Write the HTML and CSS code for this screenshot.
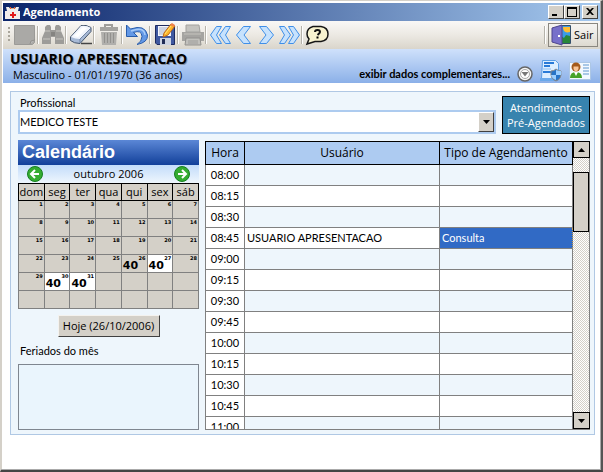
FILE: index.html
```html
<!DOCTYPE html>
<html lang="pt-BR">
<head>
<meta charset="utf-8">
<title>Agendamento</title>
<link rel="stylesheet" href="styles.css">
</head>
<body>
<div class="window">
  <header class="titlebar">
    <svg class="app-icon" viewBox="0 0 15 15" aria-hidden="true"><path d="M4 3h7v3H4z" fill="#d8b08a"/><path d="M1 2h3l1 2h5l1-2h3l-1 4H2z" fill="#eee"/><path d="M0 6h15v8H0z" fill="#f2ecea"/><path d="M5 2h1v2H5zM9 2h1v2H9z" fill="#e85a30"/><path d="M7 7h2v2h2v2H9v2H7v-2H5V9h2z" fill="#e01818"/></svg>
    <h1 class="titlebar-text">Agendamento</h1>
    <div class="window-buttons">
      <button class="win-btn" aria-label="Minimizar"><svg viewBox="0 0 12 10"><path d="M2 7h5v2H2z"/></svg></button>
      <button class="win-btn" aria-label="Maximizar"><svg viewBox="0 0 12 10"><path d="M1 0h10v10H1zM2 2v7h8V2z" fill-rule="evenodd"/></svg></button>
      <button class="win-btn win-btn-close" aria-label="Fechar"><svg viewBox="0 0 12 10"><path d="M2 1h2l2 2 2-2h2L7 4.500l3 3.500H8L6 6 4 8H2l3-3.500z"/></svg></button>
    </div>
  </header>

  <nav class="toolbar" aria-label="Ferramentas">
    <span class="grip"></span>
    <button class="tool" aria-label="Novo"><svg viewBox="0 0 24 24"><path d="M1.500 2.500h20v17l-2 2h-18z" fill="#aaa9a6" stroke="#9b9a97"/><path d="M17 21l1-3 4-1" fill="#bbb" stroke="#908f8c"/></svg></button>
    <span class="sep"></span>
    <button class="tool" aria-label="Pesquisar"><svg viewBox="0 0 24 24"><path d="M4 4l2-2h3l1 2v3h4V4l1-2h3l2 2v4l3 7v6h-9v-7h-4v7H1v-6l3-7z" fill="#9d9c99"/><path d="M2 16h7M15 16h7M4 8h5M15 8h5" stroke="#c8c6c0"/><path d="M10 9h4v4h-4z" fill="#858481"/></svg></button>
    <span class="sep"></span>
    <button class="tool" aria-label="Limpar"><svg viewBox="0 0 24 24"><path d="M12 20.500h11" stroke="#444" stroke-width="1.500"/><path d="M1.500 14L12 2.500q5-1 10 2v4L11 20.500q-6 0-9.500-3z" fill="#a8bad6" stroke="#44546c"/><path d="M2 14L12 3q5-1 10 2L11 16q-5 0-9-2z" fill="#f0f4fc"/><path d="M5 13l9-9 4 1-9 9z" fill="#fff"/><path d="M11 16v4M11 16L22 5" stroke="#7185a5"/></svg></button>
    <span class="sep"></span>
    <button class="tool" aria-label="Excluir"><svg viewBox="0 0 24 24"><path d="M8 4V2h7v2" fill="none" stroke="#9f9e9b" stroke-width="2"/><path d="M3 4h18v4H3z" fill="#a5a4a1"/><path d="M4 9h16l-1 13H5z" fill="#b0afac"/><path d="M7.500 10v10M10.500 10v10M13.500 10v10M16.500 10v10" stroke="#92918e"/></svg></button>
    <span class="sep"></span>
    <button class="tool" aria-label="Desfazer"><svg viewBox="0 0 24 24"><path d="M1.500 2v11.500h11l-4-4q8-3 8.500 4 0 5-5 8 11-2 10.500-9.500Q20 1 5.500 6z" fill="#6398e6" stroke="#285cab"/><path d="M6 8Q19 3 20 12" fill="none" stroke="#a6caf8" stroke-width="1.500"/></svg></button>
    <span class="sep"></span>
    <button class="tool" aria-label="Salvar"><svg viewBox="0 0 24 24"><path d="M2.500 2.500h18l1 1v18H4l-1.500-1.500z" fill="#4059a0" stroke="#1f2c60"/><path d="M5 3h13v10H5z" fill="#f4f6fc"/><path d="M6 5h10M6 7h9M6 9h8M6 11h7" stroke="#a5afc8"/><path d="M7 15h11v7H7z" fill="#cdd4e2"/><path d="M9 16h3v5H9z" fill="#222e56"/><path d="M10 14l1-4 7-9 4 2-7 9z" fill="#ffb62a" stroke="#bd6819"/><path d="M17 2l4 2 1-2-3-2z" fill="#ef824d"/><path d="M12 11l6-8" stroke="#ffe879"/></svg></button>
    <span class="sep"></span>
    <button class="tool" aria-label="Imprimir"><svg viewBox="0 0 24 24"><path d="M5 2h13l1 7H5z" fill="#c4c3bf" stroke="#a3a29f"/><path d="M1 9h22v9H1z" fill="#a5a4a1"/><path d="M3 11h17" stroke="#c6c4be"/><path d="M5 15h14l1 7H4z" fill="#c1c0bc" stroke="#92918e"/><path d="M7 18h10M7 20h10" stroke="#9f9e9b"/></svg></button>
    <span class="sep"></span>
    <button class="tool tool-nav" aria-label="Primeiro"><svg viewBox="0 0 23 24"><g fill="#c7e2fd" stroke="#3f8fe8"><path d="M7.500 3.500h5l-5 8.500 5 8.500h-5L1.500 12z"/><path d="M16.500 3.500h5l-5 8.500 5 8.500h-5l-6-8.500z"/></g></svg></button>
    <button class="tool tool-nav" aria-label="Anterior"><svg viewBox="0 0 23 24"><path d="M11.500 3.500h7L12 12l6.500 8.500h-7L4.500 12z" fill="#c7e2fd" stroke="#3f8fe8"/></svg></button>
    <button class="tool tool-nav" aria-label="Próximo"><svg viewBox="0 0 23 24"><path d="M11.500 3.500h-7L11 12l-6.500 8.500h7l7-8.500z" fill="#c7e2fd" stroke="#3f8fe8"/></svg></button>
    <button class="tool tool-nav" aria-label="Último"><svg viewBox="0 0 23 24"><g fill="#c7e2fd" stroke="#3f8fe8"><path d="M6.500 3.500h-5l5 8.500-5 8.500h5l6-8.500z"/><path d="M15.500 3.500h-5l5 8.500-5 8.500h5l6-8.500z"/></g></svg></button>
    <span class="sep"></span>
    <button class="tool" aria-label="Ajuda"><svg viewBox="0 0 24 24"><path d="M8 3.500h8q7 1 7 7.500t-7 7.500h-6L2 21l2-5q-2-2-2-5 0-6 6-7.500z" fill="#f7f2cf" stroke="#151515" stroke-width="1.500"/><path d="M10 9q0-2 2.500-2T15 9q0 1-2.500 3" fill="none" stroke="#111" stroke-width="2"/><path d="M11.500 13.500h2v2h-2z"/></svg></button>
    <span class="sep sep-end"></span>
    <button class="exit"><svg class="exit-icon" viewBox="0 0 20 22"><path d="M9 2h10v17H9z" fill="#3b9ce8"/><path d="M12 3h7v5q-7 2-7-5z" fill="#ffbd32"/><path d="M10 19v-7l3 2 2-3 4 1v7z" fill="#28873a"/><path d="M9.500 1.500h10v18h-10z" fill="none" stroke="#34506b"/><path d="M1 4l10-3v20L1 18z" fill="#7770ca" stroke="#4c458f"/><path d="M7 11h2v2H7z" fill="#fff"/></svg>Sair</button>
  </nav>

  <section class="patient">
    <div class="patient-info">
      <h2 class="patient-name">USUARIO APRESENTACAO</h2>
      <p class="patient-data">Masculino - 01/01/1970 (36 anos)</p>
    </div>
    <button class="more">exibir dados complementares...<svg class="more-icon" viewBox="0 0 16 16"><circle cx="8" cy="8" r="7" fill="#f6f6f6" stroke="#666" stroke-width="1.500"/><circle cx="8" cy="8" r="4.500" fill="#fff" stroke="#aaa"/><path d="M4.500 6h7L8 10.500z" fill="#777"/></svg></button>
    <button class="head-btn" aria-label="Convênio"><svg viewBox="0 0 22 22"><path d="M2.500.5h13l3 3v15h-17z" fill="#dceeff" stroke="#5a9ee5"/><path d="M0 18h16v3H0z" fill="#6aa9eb"/><path d="M4 3h10M4 6h6M3 12h9" stroke="#287ad7" stroke-width="2"/><path d="M3 9h8" stroke="#8abdf2"/><path d="M11 11q3 0 5-2 2 2 5 2 1 8-5 10-6-2-5-10z" fill="#2874c6" stroke="#888"/><path d="M16 10v5h5q1-2 0-4-3 0-5-1M11 15h5v5q-4-1-5-5" fill="#9ed0ff"/></svg></button>
    <button class="head-btn" aria-label="Ficha"><svg viewBox="0 0 22 22"><path d="M.5 2.500h21v17H.5z" fill="#f3f9ff" stroke="#adc7e5"/><path d="M14 5h6M14 8h6M14 11h6M14 14h6" stroke="#6097cf"/><path d="M1 18q0-6 6-6t6 6z" fill="#48a229"/><path d="M5 12h4l-2 4z" fill="#fff"/><circle cx="7" cy="7" r="4.500" fill="#a45a1b"/><path d="M4.500 6.500h5v2.500q-2.500 5-5 0z" fill="#f9c596"/></svg></button>
  </section>

  <main class="content">
    <div class="panel">
      <div class="top-row">
        <div class="field">
          <label class="label" for="prof">Profissional</label>
          <div class="combo">
            <select id="prof"><option>MEDICO TESTE</option></select>
            <span class="combo-arrow"><svg viewBox="0 0 7 4"><path d="M0 0h7L3.500 4z"/></svg></span>
          </div>
        </div>
        <button class="prebooked">Atendimentos<br>Pré-Agendados</button>
      </div>

      <div class="columns">
        <aside class="side">
          <h3 class="cal-title">Calendário</h3>
          <div class="cal-nav">
            <button class="round" aria-label="Mês anterior"><svg viewBox="0 0 16 16"><circle cx="8" cy="8" r="7.500" fill="#35ac30" stroke="#168020"/><path d="M12 8H4.500M8 4L4 8l4 4" fill="none" stroke="#fff" stroke-width="2"/></svg></button>
            <span>outubro 2006</span>
            <button class="round" aria-label="Próximo mês"><svg viewBox="0 0 16 16"><circle cx="8" cy="8" r="7.500" fill="#35ac30" stroke="#168020"/><path d="M4 8h7.500M8 4l4 4-4 4" fill="none" stroke="#fff" stroke-width="2"/></svg></button>
          </div>
          <table class="cal">
            <thead><tr><th>dom</th><th>seg</th><th>ter</th><th>qua</th><th>qui</th><th>sex</th><th>sáb</th></tr></thead>
            <tbody>
              <tr><td><i>1</i></td><td><i>2</i></td><td><i>3</i></td><td><i>4</i></td><td><i>5</i></td><td><i>6</i></td><td><i>7</i></td></tr>
              <tr><td><i>8</i></td><td><i>9</i></td><td><i>10</i></td><td><i>11</i></td><td><i>12</i></td><td><i>13</i></td><td><i>14</i></td></tr>
              <tr><td><i>15</i></td><td><i>16</i></td><td><i>17</i></td><td><i>18</i></td><td><i>19</i></td><td><i>20</i></td><td><i>21</i></td></tr>
              <tr><td><i>22</i></td><td><i>23</i></td><td><i>24</i></td><td><i>25</i></td><td><i>26</i><b>40</b></td><td class="open"><i>27</i><b>40</b></td><td><i>28</i></td></tr>
              <tr><td><i>29</i></td><td class="open"><i>30</i><b>40</b></td><td class="open"><i>31</i><b>40</b></td><td></td><td></td><td></td><td></td></tr>
              <tr><td></td><td></td><td></td><td></td><td></td><td></td><td></td></tr>
            </tbody>
          </table>
          <button class="today">Hoje (26/10/2006)</button>
          <h4 class="label holidays-label">Feriados do mês</h4>
          <div class="holidays"></div>
        </aside>

        <div class="grid">
          <div class="grid-view">
            <table class="agenda">
              <colgroup><col class="c-hour"><col><col class="c-type"></colgroup>
              <thead><tr><th>Hora</th><th>Usuário</th><th>Tipo de Agendamento</th></tr></thead>
              <tbody>
                <tr><td>08:00</td><td></td><td></td></tr>
                <tr><td>08:15</td><td></td><td></td></tr>
                <tr><td>08:30</td><td></td><td></td></tr>
                <tr><td>08:45</td><td>USUARIO APRESENTACAO</td><td class="selected">Consulta</td></tr>
                <tr><td>09:00</td><td></td><td></td></tr>
                <tr><td>09:15</td><td></td><td></td></tr>
                <tr><td>09:30</td><td></td><td></td></tr>
                <tr><td>09:45</td><td></td><td></td></tr>
                <tr><td>10:00</td><td></td><td></td></tr>
                <tr><td>10:15</td><td></td><td></td></tr>
                <tr><td>10:30</td><td></td><td></td></tr>
                <tr><td>10:45</td><td></td><td></td></tr>
                <tr><td>11:00</td><td></td><td></td></tr>
              </tbody>
            </table>
          </div>
          <div class="scroll">
            <button class="scroll-btn" aria-label="Rolar para cima"><svg viewBox="0 0 7 4"><path d="M0 4h7L3.500 0z"/></svg></button>
            <div class="track"><div class="thumb"></div></div>
            <button class="scroll-btn" aria-label="Rolar para baixo"><svg viewBox="0 0 7 4"><path d="M0 0h7L3.500 4z"/></svg></button>
          </div>
        </div>
      </div>
    </div>
  </main>
</div>
</body>
</html>
```
FILE: styles.css
```css
* { box-sizing: border-box; }

body {
  margin: 0;
  font-family: "Open Sans", "Noto Sans", sans-serif;
  font-size: 11px;
  line-height: 14px;
  color: #000;
}

h1, h2, h3, h4, p { margin: 0; }

button {
  font: inherit;
  color: inherit;
  padding: 0;
  border: 0;
  background: none;
}

svg { display: block; }

.window {
  display: flex;
  flex-direction: column;
  height: 100vh;
  min-height: 440px;
  padding: 2px 1px 1px 2px;
  background: #fff;
  border: 1px solid #d4d0c8;
  border-right: 2px solid #555;
  border-bottom: 2px solid #444;
  box-shadow: inset -1px -1px #aaa, inset 1px 0 #d4d0c8;
}

/* Title bar */
.titlebar {
  display: flex;
  align-items: center;
  gap: 3px;
  height: 18px;
  flex: none;
  padding: 0 2px;
  background: linear-gradient(90deg, #0a246a, #a6caf0);
}
.app-icon { width: 15px; height: 15px; }
.titlebar-text {
  flex: 1;
  font: bold 11px/16px "Open Sans", sans-serif;
  color: #fff;
}
.window-buttons { display: flex; }
.win-btn {
  width: 16px;
  height: 14px;
  padding: 1px;
  background: #d4d0c8;
  border: 1px solid;
  border-color: #fff #404040 #404040 #fff;
}
.win-btn svg { width: 12px; height: 10px; }
.win-btn-close { margin-left: 2px; }

/* Toolbar */
.toolbar {
  display: flex;
  align-items: center;
  height: 28px;
  flex: none;
  padding: 0 2px 0 5px;
  background: linear-gradient(#f9f8f6, #ece9e3 50%, #d9d5cb);
}
.grip {
  width: 2px;
  height: 16px;
  margin-right: 3px;
  background: repeating-linear-gradient(#aaa69c 0 2px, transparent 2px 4px);
}
.tool { width: 24px; height: 24px; }
.tool-nav { width: 23px; }
.tool svg { width: 100%; height: 100%; }
.sep {
  width: 4px;
  height: 18px;
  border-left: 1px solid #b5b2aa;
  background: linear-gradient(90deg, #fff 1px, transparent 1px);
}
.sep-end { margin-left: auto; }
.exit {
  display: flex;
  align-items: center;
  gap: 3px;
  width: 50px;
  height: 24px;
  padding: 0 2px;
  border: 1px solid #8a8780;
}
.exit-icon { width: 20px; height: 22px; }

/* Patient header */
.patient {
  display: flex;
  align-items: flex-end;
  gap: 7px;
  height: 34px;
  flex: none;
  padding: 0 9px 1px 7px;
  background: linear-gradient(#cfe1fb, #8bb0e8);
}
.patient-info { flex: 1; }
.patient-name {
  font: bold 14px/18px "Open Sans", sans-serif;
  text-shadow: 1px 1px #8a94a4;
}
.patient-data { padding-left: 3px; line-height: 14px; }
.more {
  display: flex;
  align-items: center;
  gap: 7px;
  font: bold 11px/14px Lato, sans-serif;
}
.more-icon { width: 16px; height: 16px; }
.head-btn { width: 22px; height: 22px; }
.head-btn svg { width: 22px; height: 22px; }

/* Main panel */
.content {
  flex: 1;
  display: flex;
  min-height: 0;
  padding: 8px 5px 34px 7px;
}
.panel {
  flex: 1;
  display: flex;
  flex-direction: column;
  gap: 6px;
  min-width: 0;
  padding: 4px 4px 4px 7px;
  background: #eef6fc;
  border: 1px solid #b0c8e4;
}
.top-row { display: flex; gap: 6px; }
.field {
  flex: 1;
  display: flex;
  flex-direction: column;
  justify-content: space-between;
}
.label {
  padding-left: 2px;
  font: 11px/14px Lato, sans-serif;
}
.combo { display: grid; border: 2px solid #adcbef; }
.combo select {
  grid-area: 1 / 1;
  appearance: none;
  height: 20px;
  padding: 0;
  border: 0;
  border-radius: 0;
  background: #fff;
  color: #000;
  font: 11px/14px Lato, sans-serif;
}
.combo-arrow {
  grid-area: 1 / 1;
  justify-self: end;
  display: grid;
  place-items: center;
  width: 16px;
  height: 20px;
  background: #d4d0c8;
  border: 1px solid;
  border-color: #fff #404040 #404040 #fff;
  pointer-events: none;
}
.combo-arrow svg, .scroll-btn svg { width: 7px; height: 4px; }
.prebooked {
  width: 88px;
  height: 38px;
  background: #3783ae;
  border: 1px solid #000;
  color: #fff;
  line-height: 15px;
}

.columns { flex: 1; display: flex; gap: 6px; min-height: 0; }

/* Calendar */
.side { width: 181px; display: flex; flex-direction: column; }
.cal-title {
  padding-left: 4px;
  font: bold 18px/25px "Liberation Sans", sans-serif;
  color: #fff;
  background: linear-gradient(#5b87d6, #12409a);
}
.cal-nav {
  display: flex;
  justify-content: space-between;
  align-items: center;
  height: 18px;
  padding: 0 9px;
  background: linear-gradient(#c3dcfa, #eef6fd);
}
.round { width: 16px; height: 16px; }
.round svg { width: 16px; height: 16px; }
.cal {
  width: 100%;
  table-layout: fixed;
  border-collapse: collapse;
  background: #d4d0c8;
  border: 1px solid #808080;
}
.cal th {
  height: 17px;
  padding: 0;
  border: 1px solid #000;
  font-weight: normal;
}
.cal td {
  position: relative;
  height: 18px;
  padding: 0;
  border: 1px solid #808080;
}
.cal i {
  position: absolute;
  top: 1px;
  right: 1px;
  font: bold 5px/5px "DejaVu Sans", sans-serif;
}
.cal b {
  display: block;
  padding: 5px 0 0 1px;
  font: bold 11px/12px "DejaVu Sans", sans-serif;
}
.cal .open { background: #fff; }
.today {
  align-self: center;
  width: 102px;
  height: 22px;
  margin-top: 6px;
  background: #d4d0c8;
  border: 1px solid;
  border-color: #f4f2ee #404040 #404040 #f4f2ee;
}
.holidays-label { margin: 7px 0 6px; }
.holidays {
  flex: 1;
  background: #eaf5fd;
  border: 1px solid #7f8690;
}

/* Agenda */
.grid {
  flex: 1;
  display: flex;
  min-width: 0;
  margin-top: 1px;
  border-bottom: 1px solid #808080;
}
.grid-view { flex: 1; overflow: hidden; }
.agenda {
  width: 100%;
  table-layout: fixed;
  border-collapse: collapse;
}
.c-hour { width: 39px; }
.c-type { width: 133px; }
.agenda th {
  height: 23px;
  padding: 0;
  background: #adcbf1;
  border: 1px solid #000;
  font-size: 12px;
  font-weight: normal;
}
.agenda td {
  height: 21px;
  padding: 0 2px;
  border: 1px solid #808080;
  background: #fff;
  font-family: Lato, sans-serif;
  white-space: nowrap;
}
.agenda td:first-child { text-align: center; }
.agenda tr:nth-child(odd) td:not(:first-child) { background: #eef6fc; }
.agenda .selected { background: #316ac5; color: #fff; border: 1px dotted #c79a4a; }
.scroll {
  display: flex;
  flex-direction: column;
  width: 17px;
}
.scroll-btn {
  display: grid;
  place-items: center;
  height: 17px;
  flex: none;
  background: #d4d0c8;
  border: 1px solid #000;
}
.track {
  flex: 1;
  padding-top: 14px;
  background: repeating-conic-gradient(#d4d0c8 0 25%, #fff 0 50%) 0 0 / 2px 2px;
  border-right: 1px solid #808080;
}
.thumb { height: 60px; background: #d4d0c8; border: 1px solid #000; }
```
